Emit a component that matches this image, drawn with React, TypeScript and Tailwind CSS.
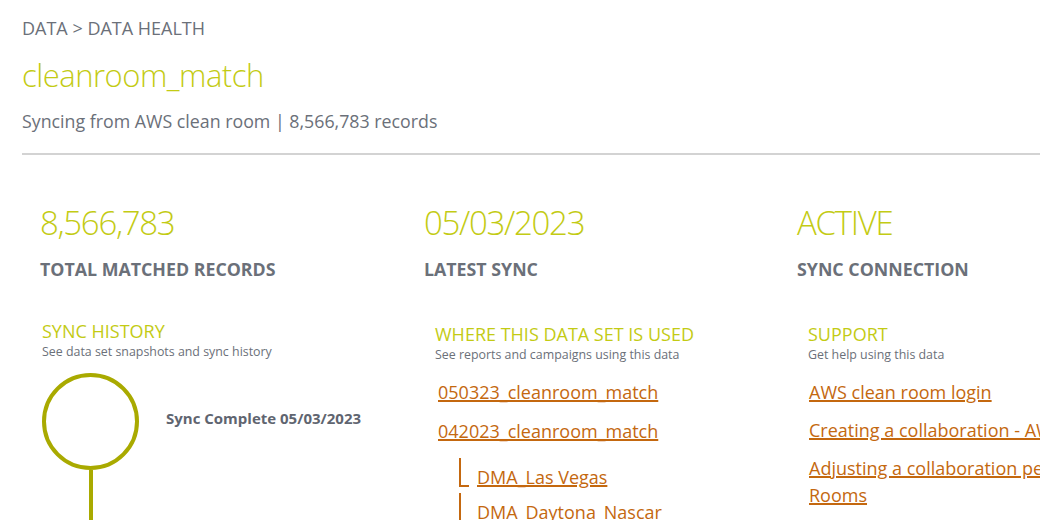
import React from 'react';

const lime = 'text-[#c3cb14]';

const stats = [
  { value: '8,566,783', label: 'TOTAL MATCHED RECORDS', w: 'w-[384px]' },
  { value: '05/03/2023', label: 'LATEST SYNC', w: 'w-[373px]' },
  { value: 'ACTIVE', label: 'SYNC CONNECTION', w: 'w-[420px]' },
];

const SectionHead: React.FC<{ title: string; sub: string }> = ({ title, sub }) => (
  <div>
    <h3 className={`text-[18px] leading-[22px] ${lime}`}>{title}</h3>
    <p className="text-[12.4px] leading-[20px] text-[#6b7079]">{sub}</p>
  </div>
);

const Link: React.FC<{ children: React.ReactNode }> = ({ children }) => (
  <a className="text-[18px] leading-[27px] text-[#c4680f] underline underline-offset-[1px] decoration-[1.5px] cursor-pointer">
    {children}
  </a>
);

const SubLink: React.FC<{ children: React.ReactNode }> = ({ children }) => (
  <div className="flex items-end h-[35px]">
    <div className="w-[10px] h-[29px] ml-[21px] mr-[8px] border-l-2 border-b-2 border-[#c4680f] mb-[4px]" />
    <Link>{children}</Link>
  </div>
);

export default function App() {
  return (
    <div className="w-[1040px] h-[520px] overflow-hidden bg-white" style={{ fontFamily: '"Open Sans", sans-serif' }}>
      <div className="w-[1400px] pl-[22px] pt-[16px]">
        <div className="text-[18px] leading-[24px] text-[#6b7079]">DATA &gt; DATA HEALTH</div>
        <h1 className={`text-[31px] leading-[44px] font-light tracking-[-0.5px] mt-[13px] ${lime}`}>cleanroom_match</h1>
        <p className="text-[17.8px] leading-[24px] text-[#6b7079] mt-[12px]">
          Syncing from AWS clean room | 8,566,783 records
        </p>
        <div className="h-[2px] bg-[#d3d3d3] mt-[20px]" />

        <div className="flex pl-[18px] mt-[46px]">
          {stats.map(s => (
            <div key={s.label} className={s.w}>
              <div className={`text-[33px] leading-[44px] font-light tracking-[-1.3px] ${lime}`}>{s.value}</div>
              <div className="text-[17.8px] leading-[22px] font-bold text-[#6b7079] mt-[13px]">{s.label}</div>
            </div>
          ))}
        </div>

        <div className="flex pl-[20px] mt-[40px]">
          <div className="w-[393px]">
            <SectionHead title="SYNC HISTORY" sub="See data set snapshots and sync history" />
            <div className="flex mt-[11px]">
              <div className="flex flex-col items-center w-[97px]">
                <div className="w-[97px] h-[97px] rounded-full border-4 border-[#a9aa00]" />
                <div className="w-[4px] h-[60px] bg-[#a9aa00]" />
              </div>
              <div className="ml-[27px] mt-[34px] text-[15px] font-bold text-[#5f6570]">Sync Complete 05/03/2023</div>
            </div>
          </div>

          <div className="w-[373px]">
            <div className="mt-[3px]">
              <SectionHead title="WHERE THIS DATA SET IS USED" sub="See reports and campaigns using this data" />
            </div>
            <div className="flex flex-col gap-[12px] mt-[14px] pl-[3px]">
              <Link>050323_cleanroom_match</Link>
              <Link>042023_cleanroom_match</Link>
            </div>
            <div className="pl-[3px] mt-[11px]">
              <SubLink>DMA_Las Vegas</SubLink>
              <SubLink>DMA_Daytona_Nascar</SubLink>
            </div>
          </div>

          <div className="w-[480px]">
            <div className="mt-[3px]">
              <SectionHead title="SUPPORT" sub="Get help using this data" />
            </div>
            <div className="flex flex-col gap-[11px] mt-[14px] pl-[1px] w-[450px]">
              <Link>AWS clean room login</Link>
              <Link>Creating a collaboration - AWS Clean Rooms</Link>
              <Link>Adjusting a collaboration permission - AWS Clean Rooms</Link>
            </div>
          </div>
        </div>
      </div>
    </div>
  );
}
